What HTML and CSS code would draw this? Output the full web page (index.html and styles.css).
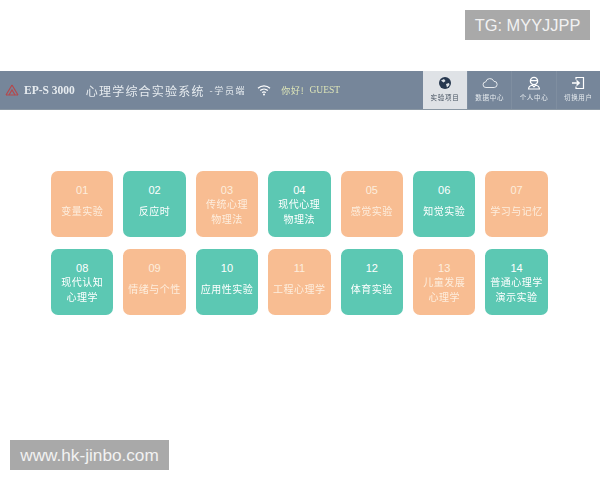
FILE: index.html
```html
<!DOCTYPE html>
<html lang="zh-CN">
<head>
    <meta charset="UTF-8">
    <title>EP-S 3000 心理学综合实验系统</title>
    <link rel="stylesheet" href="styles.css">
</head>
<body>
    <div class="tag tag-top">TG: MYYJJPP</div>

    <div class="topbar">
        <div class="brand">
            <svg class="logo" width="14" height="12" viewBox="0 0 14 12">
                <path d="M7 1L1 11M7 1l6 10M4 11l3-5 3 5" fill="none" stroke="#b5484c" stroke-width="1.2"/>
                <path d="M1 11h12" stroke="#b5484c" stroke-width="1"/>
            </svg>
            <span class="model">EP-S 3000</span>
            <span class="title">心理学综合实验系统</span>
            <span class="role">-学员端</span>
            <svg class="wifi" width="14" height="12" viewBox="0 0 14 12">
                <path d="M1 4.2C4.5 1 9.5 1 13 4.2M3.2 6.5c2.2-2 5.4-2 7.6 0M5.2 8.6c1-.9 2.6-.9 3.6 0" fill="none" stroke="#fff" stroke-width="1.2"/>
                <circle cx="7" cy="10.6" r="1" fill="#fff"/>
            </svg>
            <span class="hello">你好!</span>
            <span class="guest">GUEST</span>
        </div>
        <div class="tabs">
            <div class="tab active">
                <svg width="14" height="14" viewBox="0 0 14 14">
                    <circle cx="7" cy="7" r="6" fill="#27384f"/>
                    <path d="M3 4.5l3-1.5 1.5 2-2 1.5zM8 8l3-1 .5 2-2.5 2.5z" fill="#dfe3e8"/>
                </svg>
                <span>实验项目</span>
            </div>
            <div class="tab">
                <svg width="16" height="14" viewBox="0 0 16 14">
                    <path d="M4 11.5a2.8 2.8 0 0 1-.3-5.6 4.3 4.3 0 0 1 8.2-.6 3.1 3.1 0 0 1 .3 6.2z" fill="none" stroke="#e6eaee" stroke-width="1"/>
                </svg>
                <span>数据中心</span>
            </div>
            <div class="tab">
                <svg width="16" height="14" viewBox="0 0 16 14">
                    <circle cx="8" cy="5" r="3.6" fill="none" stroke="#fff" stroke-width="1.4"/>
                    <path d="M4.4 4.4c2 .3 5 .3 7.2 0" stroke="#fff" stroke-width="1.2"/>
                    <path d="M2.5 13c.3-2.5 2.3-3.6 3.8-3.8L8 11l1.7-1.8c1.5.2 3.5 1.3 3.8 3.8z" fill="none" stroke="#fff" stroke-width="1.1"/>
                </svg>
                <span>个人中心</span>
            </div>
            <div class="tab">
                <svg width="16" height="14" viewBox="0 0 16 14">
                    <path d="M6 3.5V1.5h7.5v11H6v-2" fill="none" stroke="#fff" stroke-width="1.2"/>
                    <path d="M2 7h7M6.5 4.5L9.2 7 6.5 9.5" fill="none" stroke="#fff" stroke-width="1.4"/>
                </svg>
                <span>切换用户</span>
            </div>
        </div>
    </div>

    <div class="grid">
        <div class="card orange"><div class="num">01</div><div class="name">变量实验</div></div>
        <div class="card green"><div class="num">02</div><div class="name">反应时</div></div>
        <div class="card orange"><div class="num">03</div><div class="name">传统心理<br>物理法</div></div>
        <div class="card green"><div class="num">04</div><div class="name">现代心理<br>物理法</div></div>
        <div class="card orange"><div class="num">05</div><div class="name">感觉实验</div></div>
        <div class="card green"><div class="num">06</div><div class="name">知觉实验</div></div>
        <div class="card orange"><div class="num">07</div><div class="name">学习与记忆</div></div>
        <div class="card green"><div class="num">08</div><div class="name">现代认知<br>心理学</div></div>
        <div class="card orange"><div class="num">09</div><div class="name">情绪与个性</div></div>
        <div class="card green"><div class="num">10</div><div class="name">应用性实验</div></div>
        <div class="card orange"><div class="num">11</div><div class="name">工程心理学</div></div>
        <div class="card green"><div class="num">12</div><div class="name">体育实验</div></div>
        <div class="card orange"><div class="num">13</div><div class="name">儿童发展<br>心理学</div></div>
        <div class="card green"><div class="num">14</div><div class="name">普通心理学<br>演示实验</div></div>
    </div>

    <div class="tag tag-bottom">www.hk-jinbo.com</div>
</body>
</html>
```
FILE: styles.css
```css
body {
    margin: 0;
    padding-top: 71px;
    background: #fff;
    font-family: "Noto Sans CJK SC", sans-serif;
    overflow: hidden;
}
.tag {
    position: absolute;
    height: 30px;
    line-height: 30px;
    background: #a9a9a9;
    color: #f2f2f2;
    font-family: "Liberation Sans", Arial, sans-serif;
    text-align: center;
}
.tag-top {
    top: 10px;
    left: 465px;
    width: 125px;
    font-size: 16.4px;
}
.tag-bottom {
    top: 440px;
    left: 10px;
    width: 159px;
    font-size: 17.2px;
}
.topbar {
    display: flex;
    justify-content: space-between;
    box-sizing: border-box;
    height: 39px;
    background: #76869a;
    border-bottom: 1px solid #8a97a3;
    color: #e6ebef;
}
.brand {
    display: flex;
    align-items: center;
    padding-left: 5px;
    filter: blur(0.3px);
}
.logo {
    margin-right: 5px;
}
.model {
    font-family: "Liberation Serif", serif;
    font-size: 11.5px;
    font-weight: bold;
    margin-right: 11px;
}
.title {
    font-size: 12px;
    letter-spacing: 1.2px;
    margin-right: 5px;
}
.role {
    font-size: 9px;
    letter-spacing: 1.6px;
}
.wifi {
    margin-left: 11px;
    margin-right: 10px;
}
.hello {
    font-size: 9px;
    letter-spacing: 0.8px;
    color: #dde5b8;
    margin-right: 5px;
}
.guest {
    font-family: "Liberation Serif", serif;
    font-size: 9.5px;
    color: #dde5b8;
}
.tabs {
    display: flex;
}
.tab {
    width: 44.3px;
    display: flex;
    flex-direction: column;
    align-items: center;
    padding-top: 5px;
    box-sizing: border-box;
    color: #e6ebef;
    font-size: 6.5px;
    letter-spacing: 0.7px;
    border-left: 1px solid #7f8ea0;
}
.tab span {
    margin-top: 3px;
    line-height: 9px;
    white-space: nowrap;
    filter: blur(0.3px);
}
.tab.active {
    background: #dfe2e6;
    color: #44505f;
    border-left: 0;
}
.grid {
    display: grid;
    grid-template-columns: repeat(7, 62.4px);
    grid-auto-rows: 66px;
    column-gap: 10px;
    row-gap: 12px;
    margin: 61px 0 0 51px;
}
.card {
    border-radius: 7px;
    color: #fff;
    text-align: center;
    padding-top: 13px;
    box-sizing: border-box;
}
.orange {
    background: #f8bd92;
    color: #fdeede;
}
.green {
    background: #5cc8b3;
}
.num {
    font-family: "Liberation Sans", Arial, sans-serif;
    font-size: 11px;
    line-height: 12px;
    margin-bottom: 3px;
}
.name {
    font-size: 10px;
    letter-spacing: 0.5px;
    line-height: 14.5px;
    white-space: nowrap;
    height: 25px;
    display: flex;
    align-items: center;
    justify-content: center;
    filter: blur(0.3px);
}
```
